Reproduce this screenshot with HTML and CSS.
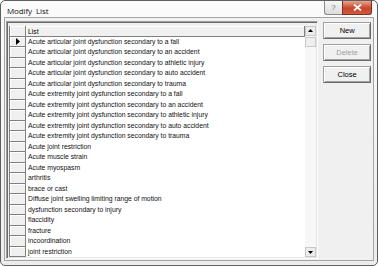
FILE: index.html
```html
<!DOCTYPE html>
<html>
<head>
<meta charset="utf-8">
<link rel="stylesheet" href="styles.css">
</head>
<body>
<div class="window">
  <div class="titlebar">
    <span class="title">Modify&nbsp; List</span>
    <div class="caption-btns">
      <div class="cbtn help">?</div>
      <div class="cbtn close">
        <svg width="9" height="7" viewBox="0 0 9 7"><path d="M1 0.5 L8 6.5 M8 0.5 L1 6.5" stroke="#fff" stroke-width="1.8"/></svg>
      </div>
    </div>
  </div>
  <div class="client">
    <div class="grid">
      <div class="grid-body">
        <div class="head">
          <div class="ind"></div>
          <div class="hcell">List</div>
        </div>
        <div class="rows">
          <div class="row"><div class="ind cur"><svg width="4" height="7" viewBox="0 0 4 7"><path d="M0 0 L4 3.5 L0 7 Z" fill="#000"/></svg></div><div class="cell">Acute articular joint dysfunction secondary to a fall</div></div>
          <div class="row"><div class="ind"></div><div class="cell">Acute articular joint dysfunction secondary to an accident</div></div>
          <div class="row"><div class="ind"></div><div class="cell">Acute articular joint dysfunction secondary to athletic injury</div></div>
          <div class="row"><div class="ind"></div><div class="cell">Acute articular joint dysfunction secondary to auto accident</div></div>
          <div class="row"><div class="ind"></div><div class="cell">Acute articular joint dysfunction secondary to trauma</div></div>
          <div class="row"><div class="ind"></div><div class="cell">Acute extremity joint dysfunction secondary to a fall</div></div>
          <div class="row"><div class="ind"></div><div class="cell">Acute extremity joint dysfunction secondary to an accident</div></div>
          <div class="row"><div class="ind"></div><div class="cell">Acute extremity joint dysfunction secondary to athletic injury</div></div>
          <div class="row"><div class="ind"></div><div class="cell">Acute extremity joint dysfunction secondary to auto accident</div></div>
          <div class="row"><div class="ind"></div><div class="cell">Acute extremity joint dysfunction secondary to trauma</div></div>
          <div class="row"><div class="ind"></div><div class="cell">Acute joint restriction</div></div>
          <div class="row"><div class="ind"></div><div class="cell">Acute muscle strain</div></div>
          <div class="row"><div class="ind"></div><div class="cell">Acute myospasm</div></div>
          <div class="row"><div class="ind"></div><div class="cell">arthritis</div></div>
          <div class="row"><div class="ind"></div><div class="cell">brace or cast</div></div>
          <div class="row"><div class="ind"></div><div class="cell">Diffuse joint swelling limiting range of motion</div></div>
          <div class="row"><div class="ind"></div><div class="cell">dysfunction secondary to injury</div></div>
          <div class="row"><div class="ind"></div><div class="cell">flaccidity</div></div>
          <div class="row"><div class="ind"></div><div class="cell">fracture</div></div>
          <div class="row"><div class="ind"></div><div class="cell">incoordination</div></div>
          <div class="row"><div class="ind"></div><div class="cell">joint restriction</div></div>
        </div>
      </div>
      <div class="vscroll">
        <div class="sbtn"><svg width="5" height="3" viewBox="0 0 5 3"><path d="M0 3 L2.5 0 L5 3 Z" fill="#000"/></svg></div>
        <div class="thumb"></div>
        <div class="track"></div>
        <div class="sbtn"><svg width="5" height="3" viewBox="0 0 5 3"><path d="M0 0 L2.5 3 L5 0 Z" fill="#000"/></svg></div>
      </div>
    </div>
    <div class="buttons">
      <div class="btn">New</div>
      <div class="btn disabled">Delete</div>
      <div class="btn">Close</div>
    </div>
  </div>
</div>
</body>
</html>
```

FILE: styles.css
```css
html, body {
  margin: 0;
  padding: 0;
  background: #ffffff;
}
.window {
  box-sizing: border-box;
  width: 378px;
  height: 266px;
  border: 1px solid #5e5e5e;
  border-radius: 5px;
  background: linear-gradient(#fbfbfb, #ececec);
  padding: 0 3px 4px 3px;
  display: flex;
  flex-direction: column;
  font-family: "Liberation Sans", Arial, sans-serif;
}
.titlebar {
  height: 19px;
  display: flex;
  align-items: flex-start;
  justify-content: space-between;
}
.title {
  font-family: "Open Sans", sans-serif;
  font-size: 8px;
  letter-spacing: -0.1px;
  color: #111;
  margin: 4px 0 0 3px;
}
.caption-btns {
  display: flex;
  margin-right: 2px;
}
.cbtn {
  height: 14px;
  box-sizing: border-box;
  display: flex;
  align-items: center;
  justify-content: center;
  border: 1px solid #8a8a8a;
  border-top: none;
}
.help {
  width: 18px;
  border-radius: 0 0 0 3px;
  background: linear-gradient(#f6f6f6, #dcdcdc);
  color: #777;
  font-size: 8px;
  border-right: none;
}
.close {
  width: 30px;
  border-radius: 0 0 3px 0;
  background: linear-gradient(#e9a58f, #c8442a 55%, #d2593f);
  border-color: #7a3024;
}
.client {
  flex: 1;
  border: 1px solid #a5a5a5;
  background: #f0f0f0;
  display: flex;
  gap: 5px;
  padding: 3px 2px 1px 1px;
}
.grid {
  width: 309px;
  border-top: 1px solid #a0a0a0;
  border-left: 1px solid #a0a0a0;
  border-right: 1px solid #ffffff;
  border-bottom: 1px solid #ffffff;
  box-shadow: inset 1px 1px 0 #696969, inset -1px -1px 0 #e3e3e3;
  padding: 4px 1px 1px 2px;
  display: flex;
  background: #f0f0f0;
}
.grid-body {
  flex: 1;
  background: #ffffff;
  overflow: hidden;
  font-size: 6.8px;
  border-left: 1px solid #808080;
}
.head {
  display: flex;
  height: 11px;
  background: #f0f0f0;
}
.head .ind, .row .ind {
  width: 16px;
  flex: none;
  box-sizing: border-box;
  background: #f0f0f0;
  border-right: 1px solid #808080;
  border-bottom: 1px solid #808080;
  box-shadow: inset 1px 1px 0 #ffffff;
}
.hcell {
  flex: 1;
  border-right: 1px solid #808080;
  border-bottom: 1px solid #808080;
  box-shadow: inset 1px 1px 0 #ffffff;
  padding-left: 2px;
  line-height: 11px;
  color: #000;
}
.row {
  display: flex;
  height: 10.5px;
}
.cell {
  flex: 1;
  padding-left: 2px;
  line-height: 10.5px;
  white-space: nowrap;
  color: #111;
}
.ind.cur {
  display: flex;
  align-items: center;
  justify-content: center;
}
.vscroll {
  width: 11px;
  display: flex;
  flex-direction: column;
  background: #f7f7f7;
}
.sbtn {
  height: 10px;
  box-sizing: border-box;
  border: 1px solid #c9c9c9;
  background: #ececec;
  display: flex;
  align-items: center;
  justify-content: center;
}
.thumb {
  height: 10px;
  box-sizing: border-box;
  border: 1px solid #c9c9c9;
  background: #eeeeee;
  margin-top: 1px;
}
.track {
  flex: 1;
}
.buttons {
  display: flex;
  flex-direction: column;
  gap: 5px;
  width: 48px;
  padding-top: 1px;
}
.btn {
  height: 17px;
  box-sizing: border-box;
  border: 1px solid #a0a0a0;
  border-right-color: #696969;
  border-bottom-color: #696969;
  box-shadow: inset 1px 1px 0 #ffffff, inset -1px -1px 0 #a0a0a0;
  background: #f0f0f0;
  font-size: 7.5px;
  display: flex;
  align-items: center;
  justify-content: center;
  color: #000;
}
.btn.disabled {
  color: #a0a0a0;
}
```
